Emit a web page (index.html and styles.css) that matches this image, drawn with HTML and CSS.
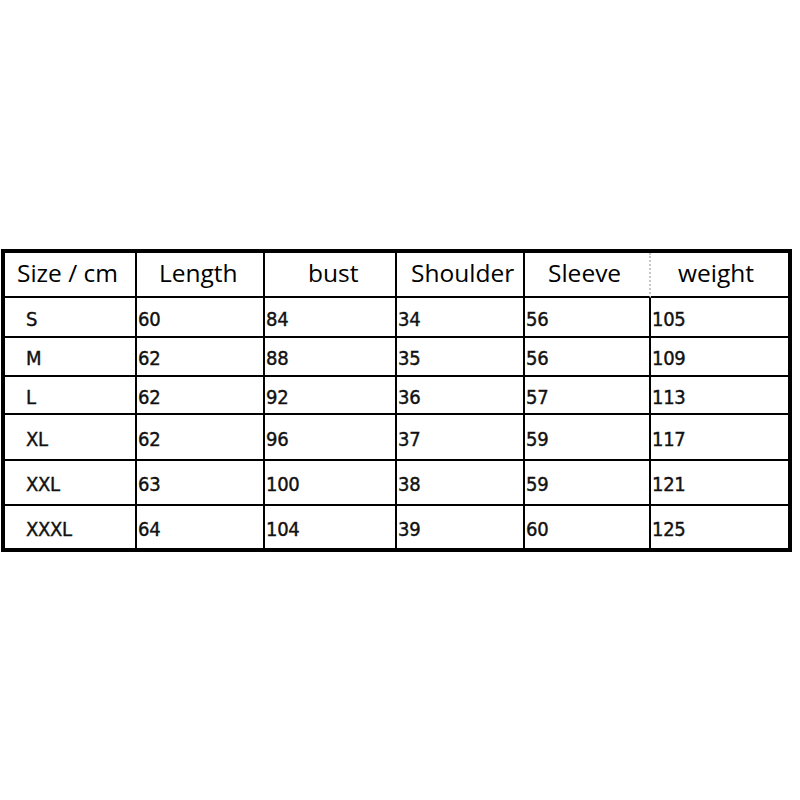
FILE: index.html
```html
<!DOCTYPE html>
<html>
<head>
<meta charset="utf-8">
<link rel="stylesheet" href="styles.css">
</head>
<body>
<div class="page">
<table class="size-table">
<colgroup>
<col class="c1"><col class="c2"><col class="c3"><col class="c4"><col class="c5"><col class="c6">
</colgroup>
<thead>
<tr class="r-head">
<th class="h1">Size / cm</th>
<th class="h2">Length</th>
<th class="h3">bust</th>
<th class="h4">Shoulder</th>
<th class="h5">Sleeve</th>
<th class="h6">weight</th>
</tr>
</thead>
<tbody>
<tr class="r1"><td class="size">S</td><td>60</td><td>84</td><td>34</td><td>56</td><td>105</td></tr>
<tr class="r2"><td class="size">M</td><td>62</td><td>88</td><td>35</td><td>56</td><td>109</td></tr>
<tr class="r3"><td class="size">L</td><td>62</td><td>92</td><td>36</td><td>57</td><td>113</td></tr>
<tr class="r4"><td class="size">XL</td><td>62</td><td>96</td><td>37</td><td>59</td><td>117</td></tr>
<tr class="r5"><td class="size">XXL</td><td>63</td><td>100</td><td>38</td><td>59</td><td>121</td></tr>
<tr class="r6"><td class="size">XXXL</td><td>64</td><td>104</td><td>39</td><td>60</td><td>125</td></tr>
</tbody>
</table>
</div>
</body>
</html>
```

FILE: styles.css
```css
html, body {
  margin: 0;
  padding: 0;
  background: #ffffff;
}

.page {
  padding-top: 249px;
  padding-left: 1px;
}

.size-table {
  table-layout: fixed;
  width: 791px;
  border-collapse: separate;
  border-spacing: 0;
  border: 4px solid #000;
  color: #111;
}

.c1 { width: 132px; }
.c2 { width: 128px; }
.c3 { width: 132px; }
.c4 { width: 128px; }
.c5 { width: 126px; }
.c6 { width: 137px; }

.size-table th,
.size-table td {
  padding: 0;
  border-right: 2px solid #000;
  border-bottom: 2px solid #000;
  text-align: left;
  vertical-align: middle;
  white-space: nowrap;
  box-sizing: border-box;
}

.size-table th:last-child,
.size-table td:last-child {
  border-right: none;
}

.size-table tbody tr:last-child td {
  border-bottom: none;
}

.size-table th {
  font-family: "Open Sans", "Noto Sans", sans-serif;
  font-weight: normal;
  font-size: 24.5px;
  color: #000;
  padding-bottom: 5px;
}

.size-table th.h5 {
  border-right: 2px dotted #c8c8c8;
}

.h1 { padding-left: 12px !important; }
.h2 { padding-left: 22px !important; }
.h3 { padding-left: 43px !important; }
.h4 { padding-left: 14px !important; }
.h5 { padding-left: 23px !important; }
.h6 { padding-left: 27px !important; }

.size-table td {
  font-family: "DejaVu Sans", "Liberation Sans", sans-serif;
  font-stretch: condensed;
  font-size: 20px;
  letter-spacing: -0.3px;
  -webkit-text-stroke: 0.4px #111;
  padding-left: 1px;
  padding-top: 3px;
}

.size-table td.size {
  padding-left: 21px;
}

.r-head { height: 45px; }
.r1 { height: 40px; }
.r2 { height: 39px; }
.r3 { height: 38px; }
.r4 { height: 46px; }
.r5 { height: 45px; }
.r6 { height: 42px; }
```
